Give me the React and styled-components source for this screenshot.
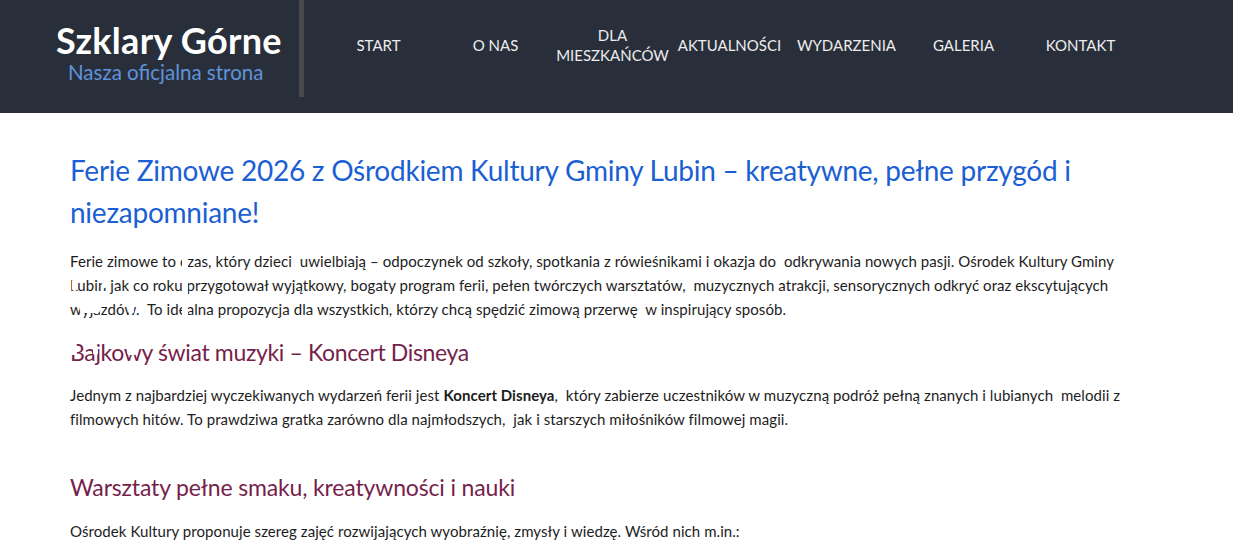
import React from "react";
import styled, { createGlobalStyle } from "styled-components";

const Global = createGlobalStyle`
  html, body { margin: 0; padding: 0; background: #fff; }
  body { font-family: Lato, "Open Sans", sans-serif; }
  * { box-sizing: border-box; }
`;

const Page = styled.div`
  position: relative;
  width: 1233px;
  min-height: 548px;
  overflow: hidden;
`;

const Header = styled.header`
  height: 113px;
  background: #292f3a;
  display: flex;
  align-items: flex-start;
`;

const Brand = styled.div`
  width: 299px;
  height: 97px;
  display: flex;
  flex-direction: column;
  align-items: flex-start;
  padding-top: 19px;
  padding-left: 56px;
`;

const BrandTitle = styled.div`
  color: #ffffff;
  font-size: 36px;
  font-weight: 700;
  line-height: 42px;
  letter-spacing: 0.3px;
`;

const BrandSub = styled.div`
  color: #5f93dc;
  font-size: 20.5px;
  line-height: 22px;
  padding-left: 12px;
`;

const Divider = styled.div`
  width: 5px;
  height: 97px;
  background: #4a4a4c;
`;

const Nav = styled.nav`
  display: flex;
  height: 90px;
  align-items: center;
  padding-left: 16px;
`;

const NavItem = styled.a`
  width: 117px;
  text-align: center;
  color: #ecedef;
  font-size: 15px;
  line-height: 20px;
  text-transform: uppercase;
  text-decoration: none;
`;

const Main = styled.main`
  padding: 36px 0 0 70px;
  width: 1180px;
`;

const Title = styled.h1`
  margin: 0 0 16px;
  color: #1b5fd3;
  font-size: 28px;
  font-weight: 400;
  line-height: 42px;
  letter-spacing: -0.25px;
`;

const Para = styled.p`
  margin: 0;
  color: #1d1d1d;
  font-size: 15px;
  line-height: 24px;
  letter-spacing: 0.07px;
  b { font-weight: 700; }
`;

const SubTitle = styled.h2`
  margin: ${(p) => p.$top}px 0 ${(p) => p.$bottom}px;
  color: #761f4b;
  font-size: 23px;
  font-weight: 400;
  line-height: 32px;
  letter-spacing: ${(p) => p.$ls}px;
`;

const Flake = styled.span`
  position: absolute;
  left: ${(p) => p.$x}px;
  top: ${(p) => p.$y}px;
  width: ${(p) => p.$w}px;
  height: ${(p) => p.$h}px;
  background: #fff;
  border-radius: 3px;
`;

const flakes = [
  { x: 182, y: 252, w: 6, h: 68 },
  { x: 72, y: 279, w: 5, h: 12 },
  { x: 102, y: 279, w: 5, h: 9 },
  { x: 80, y: 304, w: 20, h: 9 },
  { x: 128, y: 304, w: 6, h: 10 },
  { x: 140, y: 301, w: 4, h: 6 },
  { x: 70, y: 343, w: 7, h: 12 },
  { x: 93, y: 345, w: 5, h: 10 },
  { x: 127, y: 346, w: 10, h: 9 },
];

const navItems = ["Start", "O nas", ["Dla", "mieszkańców"], "Aktualności", "Wydarzenia", "Galeria", "Kontakt"];

export default function App() {
  return (
    <Page>
      <Global />
      <Header>
        <Brand>
          <BrandTitle>Szklary Górne</BrandTitle>
          <BrandSub>Nasza oficjalna strona</BrandSub>
        </Brand>
        <Divider />
        <Nav>
          {navItems.map((n, i) => (
            <NavItem key={i} href="#">
              {Array.isArray(n) ? (
                <>
                  {n[0]}
                  <br />
                  {n[1]}
                </>
              ) : (
                n
              )}
            </NavItem>
          ))}
        </Nav>
      </Header>
      <Main>
        <Title>
          Ferie Zimowe 2026 z Ośrodkiem Kultury Gminy Lubin – kreatywne, pełne przygód i
          <br />
          niezapomniane!
        </Title>
        <Para>
          Ferie zimowe to czas, który dzieci&nbsp; uwielbiają – odpoczynek od szkoły, spotkania z rówieśnikami i okazja do&nbsp; odkrywania nowych pasji. Ośrodek Kultury Gminy
          <br />
          Lubin jak co roku przygotował wyjątkowy, bogaty program ferii, pełen twórczych warsztatów,&nbsp; muzycznych atrakcji, sensorycznych odkryć oraz ekscytujących
          <br />
          wyjazdów.&nbsp; To idealna propozycja dla wszystkich, którzy chcą spędzić zimową przerwę&nbsp; w inspirujący sposób.
        </Para>
        <SubTitle $top={15} $bottom={15} $ls={-0.35}>Bajkowy świat muzyki – Koncert Disneya</SubTitle>
        <Para>
          Jednym z najbardziej wyczekiwanych wydarzeń ferii jest <b>Koncert Disneya</b>,&nbsp; który zabierze uczestników w muzyczną podróż pełną znanych i lubianych&nbsp; melodii z
          <br />
          filmowych hitów. To prawdziwa gratka zarówno dla najmłodszych,&nbsp; jak i starszych miłośników filmowej magii.
        </Para>
        <SubTitle $top={40} $bottom={16} $ls={-0.15}>Warsztaty pełne smaku, kreatywności i nauki</SubTitle>
        <Para>Ośrodek Kultury proponuje szereg zajęć rozwijających wyobraźnię, zmysły i wiedzę. Wśród nich m.in.:</Para>
      </Main>
      {flakes.map((f, i) => (
        <Flake key={i} $x={f.x} $y={f.y} $w={f.w} $h={f.h} />
      ))}
    </Page>
  );
}
